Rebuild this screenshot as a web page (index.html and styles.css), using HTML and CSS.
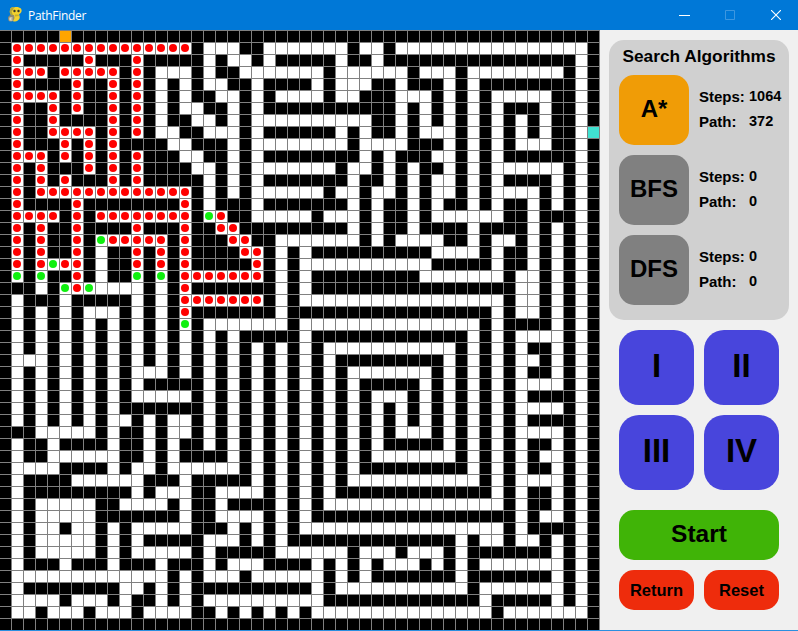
FILE: index.html
```html
<!DOCTYPE html>
<html lang="en">
<head>
<meta charset="utf-8">
<title>PathFinder</title>
<link rel="stylesheet" href="styles.css">
</head>
<body>
<div class="window">
  <header class="titlebar">
    <svg class="app-icon" viewBox="0 0 16 16" width="16" height="16" aria-hidden="true">
      <path d="M3 3c0-2 2-3 4-2.500 1-.8 4-.8 5 0 2 .5 3 2 2.500 4-.5 1.500-1.500 2-2.500 3 .5 1 1 2.500.5 4-.5 1.500-2.500 3-4.500 3-1.500 0-2.500-.5-3-1.500L4 8C3 7 2.500 5 3 3z" fill="#f2d22e"/>
      <path d="M3 3c0-2 2-3 4-2.500L6 3 4.500 4.500 6 8l-2 0C3 7 2.500 5 3 3z" fill="#b4a63c"/>
      <path d="M1 11c0-1.500 1.500-3 3.500-3H7l.5 3-1 2.500-1.500 1H3c-1 0-2-1-2-3.500z" fill="#8f8c72"/>
      <path d="M2.500 10.500h3v1h-2v1h2v1h-3z" fill="#f2f2e6"/>
      <circle cx="7.500" cy="4" r="1.200" fill="#38382a"/>
      <circle cx="11.500" cy="4" r="1.200" fill="#38382a"/>
      <path d="M8 7.500h3.500l.5 1.500-4 .5z" fill="#c9ae2a"/>
    </svg>
    <span class="app-title">PathFinder</span>
    <div class="window-controls">
      <span class="win-btn"><svg viewBox="0 0 11 10" width="11" height="10"><path d="M0 5.500h11" stroke="#fff" fill="none"/></svg></span>
      <span class="win-btn"><svg viewBox="0 0 10 10" width="10" height="10"><path d="M.5.500h9v9h-9z" stroke="#3d97e0" fill="none"/></svg></span>
      <span class="win-btn"><svg viewBox="0 0 10 10" width="10" height="10"><path d="M0 0l10 10M10 0L0 10" stroke="#fff" stroke-width="1.100" fill="none"/></svg></span>
    </div>
  </header>
  <main class="content">
    <div class="maze" id="maze"></div>
    <aside class="sidebar">
      <section class="algo-panel">
        <h2 class="panel-title">Search Algorithms</h2>
        <div class="algo-row">
          <button class="tile tile-active">A*</button>
          <dl class="stats">
            <div class="stat"><dt>Steps:</dt><dd>1064</dd></div>
            <div class="stat"><dt>Path:</dt><dd>372</dd></div>
          </dl>
        </div>
        <div class="algo-row">
          <button class="tile">BFS</button>
          <dl class="stats">
            <div class="stat"><dt>Steps:</dt><dd>0</dd></div>
            <div class="stat"><dt>Path:</dt><dd>0</dd></div>
          </dl>
        </div>
        <div class="algo-row">
          <button class="tile">DFS</button>
          <dl class="stats">
            <div class="stat"><dt>Steps:</dt><dd>0</dd></div>
            <div class="stat"><dt>Path:</dt><dd>0</dd></div>
          </dl>
        </div>
      </section>
      <section class="controls">
        <button class="level">I</button>
        <button class="level">II</button>
        <button class="level">III</button>
        <button class="level">IV</button>
        <button class="start">Start</button>
        <button class="action">Return</button>
        <button class="action">Reset</button>
      </section>
    </aside>
  </main>
</div>
<script src="maze.js"></script>
</body>
</html>
```
FILE: styles.css
```css
* { box-sizing: border-box; }
html, body { margin: 0; padding: 0; }
body { width: 798px; height: 631px; overflow: hidden; background: #f0f0f0; font-family: "Liberation Sans", Arial, sans-serif; }
.window { width: 798px; height: 631px; display: flex; flex-direction: column; border-bottom: 1px solid #2b8fe0; }
.titlebar { height: 30px; flex: none; display: flex; align-items: center; background: #0078d7; color: #fff; padding-left: 7px; }
.app-icon { flex: none; margin-right: 5px; }
.app-title { font-family: "Open Sans", "Noto Sans", sans-serif; font-size: 12px; letter-spacing: -0.3px; }
.window-controls { margin-left: auto; margin-right: -1px; display: flex; }
.win-btn { width: 46px; height: 30px; display: flex; align-items: center; justify-content: center; }
.content { flex: 1; display: flex; min-height: 0; }
.maze { width: 600px; height: 600px; flex: none; display: grid; grid-template-columns: repeat(50, 12px); grid-template-rows: repeat(50, 12px); }
.cell { border-top: 1px solid #808080; border-right: 1px solid #808080; background: #fff; display: flex; align-items: center; justify-content: center; }
.wall { background: #000; }
.start-cell { background: #ffa500; }
.goal-cell { background: #40e0d0; }
.path::after, .frontier::after { content: ""; width: 8px; height: 8px; margin: 0 1px 1px 0; border-radius: 50%; }
.path::after { background: #ff0000; }
.frontier::after { background: #0ff00f; }
.sidebar { width: 198px; flex: none; padding: 10px 0 0 9px; display: flex; flex-direction: column; }
.algo-panel { width: 180px; height: 280px; flex: none; background: #d0d0d0; border-radius: 15px; padding: 0 10px; display: flex; flex-direction: column; gap: 10px; }
.panel-title { margin: 0 0 -10px; height: 35px; font-size: 17.3px; font-weight: 700; line-height: 32px; color: #000; text-align: center; white-space: nowrap; }
.algo-row { display: flex; align-items: center; height: 70px; }
button { font-family: inherit; font-weight: 700; color: #000; border: 0; padding: 0; cursor: pointer; }
.tile { width: 70px; height: 70px; flex: none; border-radius: 15px; background: #808080; font-size: 24px; padding-bottom: 2px; }
.tile-active { background: #f09c06; }
.stats { margin: -2px 0 0 10px; font-size: 15px; font-weight: 700; display: flex; flex-direction: column; gap: 8px; }
.stat { display: flex; height: 17px; line-height: 17px; }
.stat dt { width: 50px; }
.stat dd { margin: 0; font-size: 14.5px; }
.controls { margin: 10px 0 0 10px; display: grid; grid-template-columns: 75px 75px; grid-template-rows: 75px 75px 60px 40px; gap: 10px; }
.level { border-radius: 20px; background: #4845dc; font-size: 33px; padding-bottom: 4px; }
.start { grid-column: span 2; margin-top: 10px; height: 50px; border-radius: 15px; background: #40b407; font-size: 24.5px; padding-bottom: 2px; }
.action { border-radius: 15px; background: #ee2c0c; font-size: 16.5px; height: 40px; }
```
FILE: maze.js
```js
var ROWS = [
"#####S###################" + "#########################",
"#RRRRRRRRRRRRRRR#...##..." + "....#..#................#",
"#R#####R###R#####.#..#.##" + "###.##.################.#",
"#RRR#RRRRR#R#...#.##....." + "..#......#...#........#.#",
"#R####R##R#R#.#.#..##.###" + "#.#...##.###.#.########.#",
"#RRRR#R##R#R#.#.##..#.#.." + "..#..###...#.#.#.....##.#",
"#R##R#R##R#R#.#..##.#.###" + "########.#.#.#.#.###.##.#",
"#R##R####R#R#.##..#.#...." + "......##.#.#.#.#.#.#.##.#",
"#R##RRRR#R#R#..##...#.###" + "###.#.##.#...#.#.#.#.##.E",
"#R###R#R#R####..###.#...." + "....#....###.#.#.#...##.#",
"#RRR#R#R#R#R###..##.#.###" + "#####.#.###..#.#.######.#",
"#R#R###R#R#R####..#.#...." + "...#..#.#.##.#.#......#.#",
"#R#R#R###R#R#####.#.#.###" + "####.##.#.#..#.#.####.#.#",
"#R#RRRRRRRRRRRRR#.#.#...." + "..#..#..#.#..#.#....#.#.#",
"#R####R########R#.###.###" + "####.#.##.#.##.#.##.#.#.#",
"#RRRR#R#RRRRRRRR#GR##...." + ".#...#.##.#......##.###.#",
"#R#R##R####R###R##RR#####" + "####.#.##.####.####.#.#.#",
"#R#R##R#GRRRRR#R###RR##.." + ".....#.#....##.#..#.#.#.#",
"#R#R##R#.##R#R#R####RR#.#" + ".##########....#.##.#.#.#",
"#R#RGRR#.##R#R#R#####R#.#" + "...........#####.##.#.#.#",
"#G#G##R#.##G#G#RRRRRRR#.#" + ".#########.......#..#.#.#",
"###.#GRG....#.#R#######.#" + ".#################..#.#.#",
"#.###.#####.#.#RRRRRRR#.#" + ".................#..#.#.#",
"#.#.#.#...#.#.#R#######.#" + "################.#..#.#.#",
"#.#.#.#.#.#.#.#G#.......#" + "...............#.####.#.#",
"#.#.#.#.#.#.#.#.#.#.#####" + ".#############.#.#....#.#",
"#.#.#.#.#.#.#.#.#.#.#.#.#" + ".#...........#.#.#.##.#.#",
"#...#.#.#.#.#.#.#.#.#.#.#" + ".#.#########.#.#.#..#.#.#",
"#.#.#.#.#.#...#.#.#.#.#.#" + ".#.#.......#.#.#.#.##.#.#",
"#.#.#.#.#.#.#####.#.#.#.#" + ".#.#.#####.#.#.#.#....#.#",
"#.#.#.#.#.#.....#.#.#.#.#" + ".#.#.#...#.#.#.#.#.####.#",
"#.#.#.#.#.#######.#.#.#.#" + ".#.#.#.#.#.#.#.#.#....#.#",
"#.#.#.#.#..#.#..#.#.#.#.#" + ".#.#.#.#.#.#.#.#.#.####.#",
"###.....#.##.#..#.#.#.#.#" + ".#.#.#.#...#.#.#.#....#.#",
"#.##.####.##.#.##.#.#.#.#" + ".#.#.#.#####.#.#.#.##.#.#",
"#.##......##.#.####.#.#.#" + ".#.#.#.......#.#.#.#..#.#",
"#....####.#..#......#.#.#" + ".#.#.#########.#.#.##.#.#",
"#.####......###.#####.#.#" + ".#.#...........#.#....#.#",
"#.#########.#...##....#.#" + ".#.#############.#.##.#.#",
"#.#.....##....#.##.####.#" + ".#...............#.##.#.#",
"#.#.....#######.##....#.#" + ".#################.#..#.#",
"#.#..#..#.#.....###.#.#.#" + ".................#.####.#",
"#.#.....#.#.#####...#.#.#" + "#############.#..#..#.#.#",
"#.#.....#.#.....#.#####.." + "....#...#...#.#######.#.#",
"#.###.###.###.###.#...###" + "#.#.#.#...#.#.#.......#.#",
"#.............#.#...#...." + "..#.#.#######.#######.#.#",
"#.########..#.#.#########" + "#.#...........#.......#.#",
"#....#...#.##.#.#........" + "..#############.#####.#.#",
"#..#...#...#....##.#.#.#." + "#...............#.......#",
"#########################" + "#########################"
];
var KINDS = { "#": "wall", ".": "", "R": "path", "G": "frontier", "S": "start-cell", "E": "goal-cell" };
var html = "";
ROWS.forEach(function (row) {
  row.split("").forEach(function (ch) {
    html += '<div class="cell ' + KINDS[ch] + '"></div>';
  });
});
document.getElementById("maze").innerHTML = html;
```
